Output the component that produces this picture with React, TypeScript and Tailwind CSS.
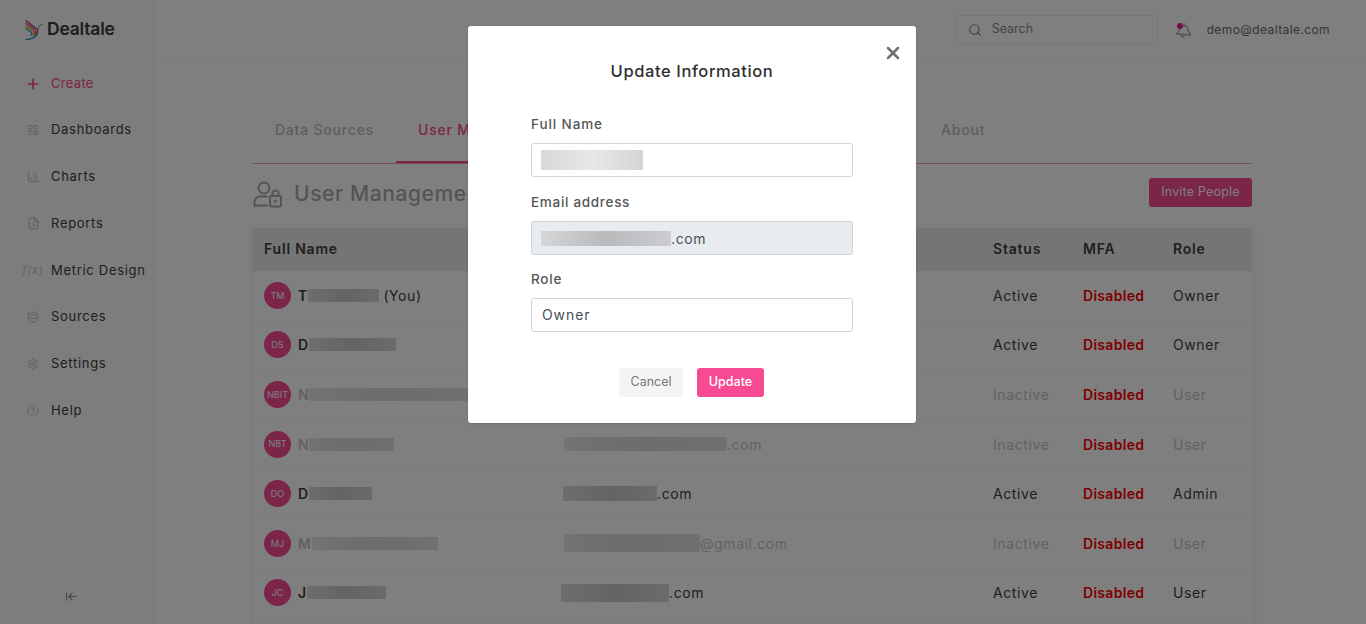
import React from 'react';
import { Plus, Search, X, FileChartColumn, Database, Settings, CircleHelp, ArrowLeftToLine, ChartColumn, LayoutGrid } from 'lucide-react';

const navItems = [
  { label: 'Dashboards', icon: <LayoutGrid className="w-[12px] h-[12px]" /> },
  { label: 'Charts', icon: <ChartColumn className="w-[13px] h-[13px]" /> },
  { label: 'Reports', icon: <FileChartColumn className="w-[13px] h-[13px]" /> },
  { label: 'Metric Design', icon: <span className="text-[11px] italic leading-none whitespace-nowrap">f(x)</span> },
  { label: 'Sources', icon: <Database className="w-[12px] h-[12px]" /> },
  { label: 'Settings', icon: <Settings className="w-[12px] h-[12px]" /> },
  { label: 'Help', icon: <CircleHelp className="w-[12px] h-[12px]" /> },
];

const users = [
  { initials: 'TM', first: 'T', nameBlur: 71, suffix: ' (You)', emailBlur: 0, emailH: 0, emailX: 0, domain: '', status: 'Active', role: 'Owner', on: true },
  { initials: 'DS', first: 'D', nameBlur: 87, suffix: '', emailBlur: 0, emailH: 0, emailX: 0, domain: '', status: 'Active', role: 'Owner', on: true },
  { initials: 'NBIT', first: 'N', nameBlur: 160, suffix: '', emailBlur: 0, emailH: 0, emailX: 0, domain: '', status: 'Inactive', role: 'User', on: false },
  { initials: 'NBT', first: 'N', nameBlur: 85, suffix: '', emailBlur: 163, emailH: 14, emailX: 1, domain: '.com', status: 'Inactive', role: 'User', on: false },
  { initials: 'DO', first: 'D', nameBlur: 63, suffix: '', emailBlur: 94, emailH: 15, emailX: 0, domain: '.com', status: 'Active', role: 'Admin', on: true },
  { initials: 'MJ', first: 'M', nameBlur: 126, suffix: '', emailBlur: 136, emailH: 18, emailX: 1, domain: '@gmail.com', status: 'Inactive', role: 'User', on: false },
  { initials: 'JC', first: 'J', nameBlur: 79, suffix: '', emailBlur: 108, emailH: 18, emailX: -2, domain: '.com', status: 'Active', role: 'User', on: true },
];

function Blur({ width, height = 13, dark, left = 0 }: { width: number; height?: number; dark: boolean; left?: number }) {
  return (
    <span
      className={`inline-block shrink-0 bg-linear-to-r ${dark ? 'from-[#dcdcdc] via-[#c8c8c8] to-[#d6d6d6]' : 'from-[#e6e6e6] via-[#d8d8d8] to-[#e2e2e2]'}`}
      style={{ width, height, marginLeft: left }}
    />
  );
}

function Logo() {
  return (
    <svg width="18" height="20" viewBox="0 0 18 20" fill="none" strokeWidth="1.5">
      <path d="M0.5 0.5 L12.5 9.5 C13 11 12.5 13 11.5 14.5" stroke="#a8458c" />
      <path d="M0.5 3 L10.5 10.5 C11 12 10.5 13.5 9.5 15" stroke="#e0457b" />
      <path d="M0.5 5.5 L8.5 11.5 C9 13 8.5 14.5 7.5 15.5" stroke="#f2a33a" />
      <path d="M0.5 8 L6.5 12.5 C7 14 6.5 15 5.5 16" stroke="#3fb5a3" />
      <path d="M0.5 19.5 C5 19.5 9.5 18 12.5 14" stroke="#2e9ab0" />
      <path d="M13 9 L14.5 5.5 L18 4" stroke="#3fb5a3" strokeWidth="1" />
    </svg>
  );
}

function Bell() {
  return (
    <svg width="18" height="18" viewBox="0 0 18 18" fill="none" stroke="#a8a8a8" strokeWidth="1.4" strokeLinecap="round" strokeLinejoin="round">
      <path d="M1.5 13 C4 11 4.5 8.5 6 6.5 C7.5 4.5 10 4 11.5 5.5 C13 7 13 10 15.5 14 Z" />
      <path d="M9.5 4.5 L9 2.5" />
      <path d="M6 14.5 C6 16 8 16.5 9 15" />
      <circle cx="5" cy="5" r="3" fill="#f0208a" stroke="none" />
    </svg>
  );
}

function UserLockIcon() {
  return (
    <svg width="29" height="27" viewBox="0 0 29 27" fill="none" stroke="#a8a8a8" strokeWidth="2" strokeLinecap="round" strokeLinejoin="round">
      <circle cx="11" cy="7" r="5.5" />
      <path d="M1.5 24.5 V21 C1.5 18 4 15.5 7 15.5 H14" />
      <path d="M1.5 24.5 H14" />
      <rect x="17" y="15" width="11" height="10.5" rx="1" />
      <path d="M19.5 15 V12 C19.5 8.5 25.5 8.5 25.5 12 V15" />
      <circle cx="22.5" cy="20" r="0.6" />
    </svg>
  );
}

export default function App() {
  return (
    <div className="relative h-[624px] w-[1366px] overflow-hidden bg-white font-['Inter','Liberation_Sans',sans-serif] text-[#3e3e3e]">
      <div className="flex h-full">
        <aside className="flex w-[156px] shrink-0 flex-col border-r border-[#f4f4f4] bg-[#fafafa]">
          <div className="flex h-[60px] shrink-0 items-center gap-[4px] border-b border-[#f4f4f4] pl-[25px]">
            <Logo />
            <span className="text-[17.5px] font-semibold tracking-[-0.2px] text-[#3a3a3a]">Dealtale</span>
          </div>
          <div className="flex h-[47px] shrink-0 items-center border-b border-[#f4f4f4] pl-[25px] pt-[1px] text-[13px] tracking-[0.3px] text-[#f74a93]">
            <Plus className="mr-[10px] h-[16px] w-[16px]" strokeWidth={2.5} />
            Create
          </div>
          {navItems.map(item => (
            <div key={item.label} className="flex h-[46.8px] shrink-0 items-center border-b border-[#f4f4f4] text-[13px] tracking-[0.7px] last:border-b-0">
              <span className="flex w-[51px] shrink-0 justify-center pl-[15px] text-[#c4c4c4]">{item.icon}</span>
              {item.label}
            </div>
          ))}
          <div className="mt-auto flex h-[34px] items-start pl-[65px] text-[#909090]">
            <ArrowLeftToLine className="h-[13px] w-[13px]" />
          </div>
        </aside>

        <div className="min-w-0 flex-1">
          <header className="flex h-[60px] items-center justify-end border-b border-[#f4f4f4]">
            <div className="flex h-[29px] w-[203px] items-center rounded-[3px] border border-[#efefef] pl-[12px] text-[12.5px] text-[#8a8a8a]">
              <Search className="mr-[10px] h-[14px] w-[14px]" />
              Search
            </div>
            <span className="ml-[17px] flex"><Bell /></span>
            <span className="ml-[14px] mr-[36px] text-[12px] tracking-[0.4px] text-[#6a6a6a]">demo@dealtale.com</span>
          </header>

          <main className="ml-[97px] w-[999px]">
            <div className="mt-[49px] flex h-[55px] border-b border-[#f74a93]/60 text-[14px] font-medium tracking-[0.8px] text-[#bdbdbd]">
              <div className="flex w-[143px] items-start justify-center pt-[10px]">Data Sources</div>
              <div className="flex w-[190px] items-start border-b-2 border-[#f74a93] pl-[22px] pt-[10px] text-[#f74a93]">User Management</div>
              <div className="w-[355px]" />
              <div className="pt-[10px]">About</div>
            </div>

            <div className="flex h-[64px] items-center justify-between">
              <div className="mt-[-4px] flex items-center gap-[12px] text-[#a8a8a8]">
                <UserLockIcon />
                <span className="text-[21px] font-medium tracking-[0.6px]">User Management</span>
              </div>
              <button className="mt-[-8px] h-[29px] w-[103px] rounded-[3px] bg-[#f74a93] text-[12.5px] tracking-[0.2px] text-white">Invite People</button>
            </div>

            <div className="shadow-[0_2px_8px_rgba(0,0,0,0.1)]">
              <div className="grid h-[43px] grid-cols-[299px_430px_90px_90px_90px] items-center bg-[#ebebeb] px-[11px] pb-[2px] text-[14px] font-semibold tracking-[0.8px]">
                <span>Full Name</span>
                <span />
                <span>Status</span>
                <span>MFA</span>
                <span>Role</span>
              </div>
              {users.map(user => (
                <div key={user.initials} className="grid h-[49.6px] grid-cols-[299px_430px_90px_90px_90px] items-center border-b border-[#f4f4f4] px-[11px] text-[14px] tracking-[0.6px]">
                  <div className={`flex items-center ${user.on ? '' : 'text-[#c4c4c4]'}`}>
                    <span className="mr-[7px] flex h-[27px] w-[27px] shrink-0 items-center justify-center rounded-full bg-[#f74a93] text-[9px] tracking-normal text-white">{user.initials}</span>
                    <span className="font-semibold">{user.first}</span>
                    <Blur width={user.nameBlur} dark={user.on} />
                    <span className="whitespace-pre">{user.suffix}</span>
                  </div>
                  <div className={`flex items-center ${user.on ? '' : 'text-[#c4c4c4]'}`}>
                    {user.emailBlur > 0 && <Blur width={user.emailBlur} height={user.emailH} dark={user.on} left={user.emailX} />}
                    {user.domain}
                  </div>
                  <span className={user.on ? '' : 'text-[#c4c4c4]'}>{user.status}</span>
                  <span className="font-semibold tracking-[0.3px] text-[#ff0000]">Disabled</span>
                  <span className={user.on ? '' : 'text-[#c4c4c4]'}>{user.role}</span>
                </div>
              ))}
              <div className="h-[30px]" />
            </div>
          </main>
        </div>
      </div>

      {/* backdrop + modal */}
      <div className="absolute inset-0 bg-black/50" />
      <div className="absolute left-[468px] top-[26px] flex h-[397px] w-[448px] flex-col rounded-[3px] bg-white px-[63px] pt-[35px] shadow-sm">
        <X className="absolute right-[13px] top-[17px] h-[20px] w-[20px] text-[#707070]" strokeWidth={3} />
        <h2 className="text-center text-[16.5px] font-medium leading-[20px] tracking-[0.6px] text-[#2f2f2f]">Update Information</h2>
        <label className="mt-[34px] text-[13.5px] font-medium leading-[18px] tracking-[0.9px] text-[#555]">Full Name</label>
        <div className="mt-[10px] flex h-[34px] items-center rounded-[3px] border border-[#ced4da] pl-[9px]">
          <span className="h-[20px] w-[102px] bg-linear-to-r from-[#d8d8d8] via-[#e8e8e8] to-[#d4d4d4]" />
        </div>
        <label className="mt-[16px] text-[13.5px] font-medium leading-[18px] tracking-[0.7px] text-[#555]">Email address</label>
        <div className="mt-[10px] flex h-[34px] items-center rounded-[3px] border border-[#ced4da] bg-[#e9ecef] pl-[9px] text-[14px] tracking-[0.6px] text-[#495057]">
          <span className="h-[15px] w-[130px] bg-linear-to-r from-[#d4d6d8] via-[#b8babc] to-[#cccdd0]" />
          .com
        </div>
        <label className="mt-[15px] text-[13.5px] font-medium leading-[18px] tracking-[0.8px] text-[#555]">Role</label>
        <div className="mt-[10px] flex h-[34px] items-center rounded-[3px] border border-[#ced4da] pb-[2px] pl-[10px] text-[14px] tracking-[0.9px] text-[#495057]">Owner</div>
        <div className="mt-[36px] flex justify-center gap-[14px] pr-[1px]">
          <button className="h-[29px] w-[64px] rounded-[3px] bg-[#f4f4f4] text-[12.5px] text-[#777]">Cancel</button>
          <button className="h-[29px] w-[67px] rounded-[3px] bg-[#f74a93] text-[12.5px] font-medium text-white">Update</button>
        </div>
      </div>
    </div>
  );
}
